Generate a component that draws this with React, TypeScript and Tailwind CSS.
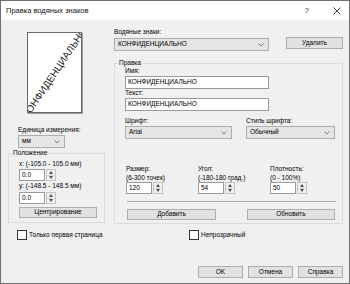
import React from 'react';

const Chevron = () => (
    <svg width="6" height="4" viewBox="0 0 6 4" className="shrink-0">
        <polyline points="0.5,0.5 3,3 5.5,0.5" fill="none" stroke="#606060" strokeWidth="0.8" />
    </svg>
);

const Select = ({ value, className }: { value: string; className: string }) => (
    <div className={`flex items-center justify-between bg-[#e5e5e5] border border-[#adadad] pl-[3px] pr-[4px] leading-none ${className}`}>
        <span>{value}</span>
        <Chevron />
    </div>
);

const Input = ({ value, className }: { value: string; className: string }) => (
    <div className={`flex items-center bg-white border border-[#9a9a9a] pl-[2px] leading-none ${className}`}>
        {value}
    </div>
);

const Button = ({ label, className }: { label: string; className: string }) => (
    <div className={`flex items-center justify-center bg-[#e1e1e1] border border-[#adadad] leading-none ${className}`}>
        {label}
    </div>
);

const Spinner = ({ value }: { value: string }) => (
    <div className="flex h-[12px]">
        <Input value={value} className="w-[26px] h-full" />
        <div className="w-[10px] h-full flex flex-col bg-[#f0f0f0] border border-[#c4c4c4] ml-[1px]">
            <div className="flex-1 flex items-center justify-center border-b border-[#d8d8d8]">
                <svg width="4" height="3" viewBox="0 0 4 3"><polygon points="2,0 4,3 0,3" fill="#505050" /></svg>
            </div>
            <div className="flex-1 flex items-center justify-center">
                <svg width="4" height="3" viewBox="0 0 4 3"><polygon points="0,0 4,0 2,3" fill="#505050" /></svg>
            </div>
        </div>
    </div>
);

const Checkbox = ({ label }: { label: string }) => (
    <div className="flex items-center">
        <div className="w-[10px] h-[10px] bg-white border border-[#333333]" />
        <span className="ml-[2px] leading-none">{label}</span>
    </div>
);

// группа с подписью поверх рамки
const Group = ({ title, className, children }: { title: string; className: string; children: React.ReactNode }) => (
    <div className={`relative border border-[#dcdcdc] ${className}`}>
        <span className="absolute -top-[5px] left-[3px] bg-[#f0f0f0] px-[1px] leading-[8px]">{title}</span>
        {children}
    </div>
);

export default function App() {
    return (
        <div className="w-[350px] h-[284px] border border-[#6f6f6f] flex flex-col text-[6.5px] text-black font-['Liberation_Sans',Arial,sans-serif]">
            {/* заголовок окна */}
            <div className="h-[19px] bg-white flex items-center pl-[5px] shrink-0">
                <span className="text-[7.5px] text-[#111111]">Правка водяных знаков</span>
                <span className="ml-auto text-[8px] text-[#333333]">?</span>
                <svg width="8" height="8" viewBox="0 0 8 8" className="ml-[24px] mr-[8px]">
                    <line x1="0.5" y1="0.5" x2="7.5" y2="7.5" stroke="#333333" strokeWidth="0.9" />
                    <line x1="7.5" y1="0.5" x2="0.5" y2="7.5" stroke="#333333" strokeWidth="0.9" />
                </svg>
            </div>

            <div className="flex-1 bg-[#f0f0f0] flex flex-col">
                <div className="flex">
                    {/* левая колонка */}
                    <div className="ml-[7px] w-[97px] flex flex-col">
                        <div className="mt-[12px] ml-[19px] w-[55px] h-[81px] bg-white border border-[#6a6a6a] shadow-[1px_1px_0_#9a9a9a] overflow-hidden flex items-center justify-center">
                            <span className="block -rotate-[56deg] whitespace-nowrap text-[10px] leading-none text-[#222222]">КОНФИДЕНЦИАЛЬНО</span>
                        </div>
                        <div className="mt-[12px] ml-[10px] leading-[9px]">Единица измерения:</div>
                        <Select value="мм" className="mt-[1px] ml-[10px] w-[47px] h-[13px]" />
                        <Group title="Положение" className="mt-[5px] h-[70px] pt-[6px] pl-[10px]">
                            <div className="leading-[8px]">x: (-105.0 - 105.0 мм)</div>
                            <div className="mt-[1px]"><Spinner value="0.0" /></div>
                            <div className="mt-[1px] leading-[8px]">y: (-148.5 - 148.5 мм)</div>
                            <div className="mt-[2px]"><Spinner value="0.0" /></div>
                            <Button label="Центрирование" className="mt-[3px] w-[78px] h-[11px]" />
                        </Group>
                    </div>

                    {/* правая колонка */}
                    <div className="ml-[9px] w-[229px] flex flex-col">
                        <div className="mt-[8px] leading-[8px]">Водяные знаки:</div>
                        <div className="mt-[1px] flex items-start">
                            <Select value="КОНФИДЕНЦИАЛЬНО" className="mt-[1px] w-[155px] h-[13px]" />
                            <Button label="Удалить" className="ml-auto w-[57px] h-[12px]" />
                        </div>
                        <Group title="Правка" className="mt-[12px] h-[161px] pt-[3px] pl-[10px]">
                            <div className="leading-[8px]">Имя:</div>
                            <Input value="КОНФИДЕНЦИАЛЬНО" className="mt-[1px] w-[144px] h-[13px]" />
                            <div className="leading-[8px]">Текст:</div>
                            <Input value="КОНФИДЕНЦИАЛЬНО" className="mt-[1px] w-[144px] h-[13px]" />
                            <div className="mt-[6px] flex">
                                <div className="w-[121px]">
                                    <div className="leading-[8px]">Шрифт:</div>
                                    <Select value="Arial" className="mt-[1px] w-[107px] h-[13px]" />
                                </div>
                                <div>
                                    <div className="leading-[8px]">Стиль шрифта:</div>
                                    <Select value="Обычный" className="mt-[1px] w-[89px] h-[13px]" />
                                </div>
                            </div>
                            <div className="mt-[25px] ml-[1px] flex">
                                {[
                                    ['Размер:', '(6-300 точек)', '120'],
                                    ['Угол:', '(-180-180 град.)', '54'],
                                    ['Плотность:', '(0 - 100%)', '50'],
                                ].map(([title, range, value]) => (
                                    <div key={title} className="w-[75px]">
                                        <div className="leading-[9px]">{title}</div>
                                        <div className="leading-[9px]">{range}</div>
                                        <Spinner value={value} />
                                    </div>
                                ))}
                            </div>
                            <div className="mt-[7px] ml-[2px] w-[209px] h-[2px] border-t border-[#a9a9a9] border-b-white" />
                            <div className="mt-[6px] flex pr-[7px]">
                                <Button label="Добавить" className="ml-[2px] w-[89px] h-[11px]" />
                                <Button label="Обновить" className="ml-auto w-[88px] h-[11px]" />
                            </div>
                        </Group>
                    </div>
                </div>

                <div className="mt-[6px] flex pl-[16px]">
                    <div className="w-[172px]"><Checkbox label="Только первая страница" /></div>
                    <Checkbox label="Непрозрачный" />
                </div>

                <div className="mt-[26px] flex justify-end gap-[5px] pr-[6px]">
                    <Button label="OK" className="w-[45px] h-[12px] border-[#0078d7]" />
                    <Button label="Отмена" className="w-[45px] h-[12px]" />
                    <Button label="Справка" className="w-[45px] h-[12px]" />
                </div>
            </div>
        </div>
    );
}
